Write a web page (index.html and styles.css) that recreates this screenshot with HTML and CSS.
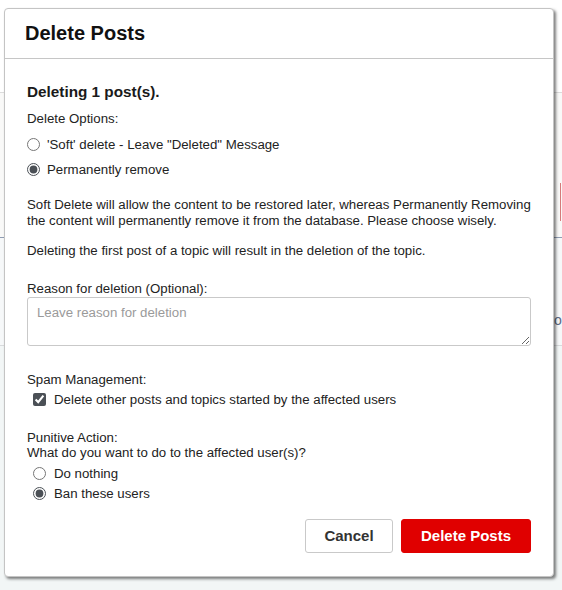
FILE: index.html
```html
<!DOCTYPE html>
<html lang="en">
<head>
<meta charset="utf-8">
<title>Delete Posts</title>
<link rel="stylesheet" href="styles.css">
</head>
<body>
<div class="page">
  <div class="band band-top"></div>
  <div class="band band-search"><div class="searchbox"></div></div>
  <div class="band band-list"><span class="or-link">or</span></div>
  <div class="band band-rest"></div>
</div>

<div class="modal" role="dialog" aria-labelledby="modal-title">
  <div class="modal-header">
    <h1 id="modal-title" class="modal-title">Delete Posts</h1>
  </div>
  <div class="modal-body">
    <h2 class="count">Deleting 1 post(s).</h2>
    <div class="label">Delete Options:</div>
    <div class="option-list">
      <label class="option"><input type="radio" name="mode"> <span>'Soft' delete - Leave "Deleted" Message</span></label>
      <label class="option"><input type="radio" name="mode" checked> <span>Permanently remove</span></label>
    </div>
    <p class="note">Soft Delete will allow the content to be restored later, whereas Permanently Removing the content will permanently remove it from the database. Please choose wisely.</p>
    <p class="note note-second">Deleting the first post of a topic will result in the deletion of the topic.</p>

    <label class="label reason-label" for="reason">Reason for deletion (Optional):</label>
    <textarea id="reason" class="reason" placeholder="Leave reason for deletion"></textarea>

    <div class="label spam-label">Spam Management:</div>
    <label class="option option-small indent"><input type="checkbox" checked> <span>Delete other posts and topics started by the affected users</span></label>

    <div class="label punitive-label">Punitive Action:</div>
    <div class="label">What do you want to do to the affected user(s)?</div>
    <div class="option-list tight indent">
      <label class="option option-small"><input type="radio" name="punish"> <span>Do nothing</span></label>
      <label class="option option-small"><input type="radio" name="punish" checked> <span>Ban these users</span></label>
    </div>

    <div class="actions">
      <button type="button" class="btn btn-cancel">Cancel</button>
      <button type="button" class="btn btn-danger">Delete Posts</button>
    </div>
  </div>
</div>
</body>
</html>
```

FILE: styles.css
```css
* { box-sizing: border-box; }

html, body {
  margin: 0;
  padding: 0;
}

body {
  font-family: "Liberation Sans", Arial, sans-serif;
  font-size: 13.25px;
  color: #222;
  background: #f1f6f6;
  width: 562px;
  height: 590px;
  overflow: hidden;
}

/* background page (behind the dialog) */
.page {
  display: flex;
  flex-direction: column;
}
.band-top {
  height: 93px;
  background: #fff;
  border-bottom: 1px solid #dcdcdc;
}
.band-search {
  height: 145px;
  background: #f9f9f8;
  border-bottom: 1px solid #8f9cb2;
  display: flex;
  justify-content: flex-end;
  padding-top: 90px;
}
.searchbox {
  width: 2px;
  height: 38px;
  border-left: 1px solid #d67a7a;
}
.band-list {
  height: 108px;
  background: #f6f8f9;
  border-bottom: 1px solid #d8dadc;
  padding: 74px 0 0 554px;
  color: #5a6b84;
  font-size: 14px;
  overflow: hidden;
  white-space: nowrap;
}
.band-rest {
  height: 250px;
  background: #f2f6f6;
}

/* dialog */
.modal {
  position: absolute;
  left: 4px;
  top: 8px;
  width: 550px;
  background: #fff;
  border: 1px solid #c4c4c4;
  border-radius: 4px;
  box-shadow: 2px 2px 3px rgba(0, 0, 0, 0.5);
}

.modal-header {
  height: 50px;
  display: flex;
  align-items: center;
  padding: 0 20px 2px;
  border-bottom: 1px solid #c6c6c6;
}
.modal-title {
  margin: 0;
  font-size: 20px;
  font-weight: bold;
  color: #111;
  line-height: 22px;
}

.modal-body {
  padding: 24px 22px 23px 22px;
  display: flex;
  flex-direction: column;
}

.count {
  margin: 0 0 11px;
  font-size: 15.3px;
  font-weight: bold;
  line-height: 17px;
  color: #1a1a1a;
}

.label {
  display: block;
  line-height: 15px;
}

.option-list {
  display: flex;
  flex-direction: column;
  gap: 5px;
  margin-top: 8px;
}
.option-list.tight {
  gap: 0;
  margin-top: 4px;
}

.option {
  display: flex;
  align-items: center;
  gap: 7px;
  height: 20px;
  line-height: 15px;
}
.option input {
  margin: 0;
  width: 13px;
  height: 13px;
  accent-color: #4b5056;
  flex: none;
}
.option-small {
  gap: 8px;
}
.indent {
  padding-left: 6px;
}

.note {
  margin: 18px 0 0;
  line-height: 15.5px;
}
.note-second {
  margin-top: 15px;
}

.reason-label {
  margin-top: 22px;
}
.reason {
  margin-top: 1px;
  width: 100%;
  height: 49px;
  border: 1px solid #c9c9c9;
  border-radius: 3px;
  padding: 7px 9px;
  font-family: "Liberation Sans", Arial, sans-serif;
  font-size: 13.25px;
  color: #222;
  resize: vertical;
}
.reason::placeholder {
  color: #9a9a9a;
}

.spam-label {
  margin-top: 26px;
  margin-bottom: 3px;
}

.punitive-label {
  margin-top: 20px;
}

.actions {
  display: flex;
  justify-content: flex-end;
  gap: 8px;
  margin-top: 15px;
}
.btn {
  height: 34px;
  border-radius: 3px;
  font-family: "Liberation Sans", Arial, sans-serif;
  font-size: 15px;
  font-weight: bold;
  cursor: pointer;
  padding: 0;
}
.btn-cancel {
  width: 88px;
  background: #fff;
  color: #333;
  border: 1px solid #c9c9c9;
}
.btn-danger {
  width: 130px;
  background: #e00000;
  color: #fff;
  border: 1px solid #e00000;
}
```
